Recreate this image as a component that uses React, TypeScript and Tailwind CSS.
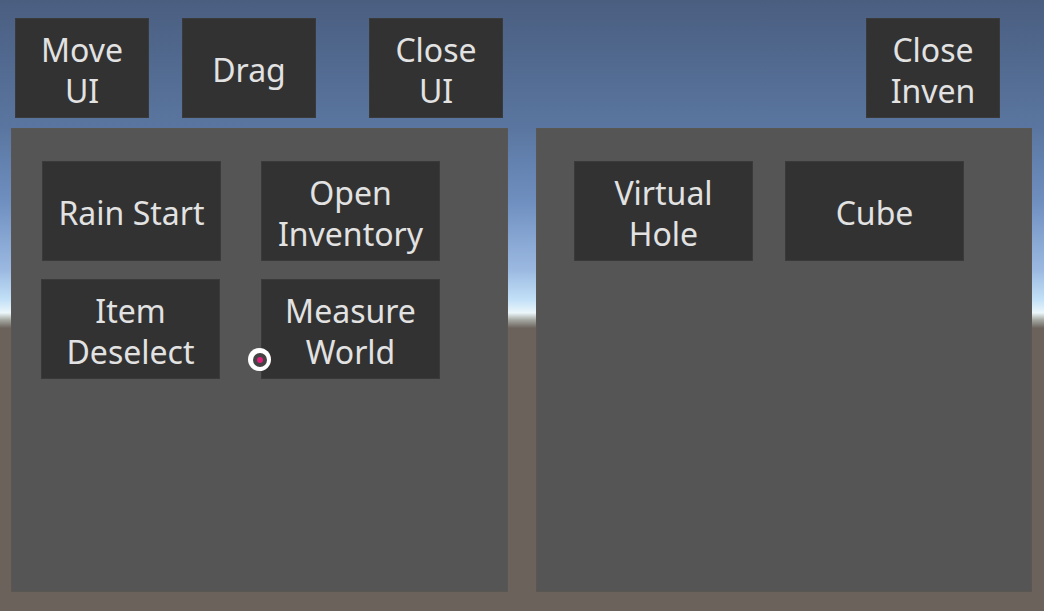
const topButtons = [
  { label: ["Move", "UI"], ml: "ml-[15px]" },
  { label: ["Drag"], ml: "ml-[33px]" },
  { label: ["Close", "UI"], ml: "ml-[53px]" },
  { label: ["Close", "Inven"], ml: "ml-auto" },
];

function Btn({ lines, className = "" }: { lines: string[]; className?: string }) {
  return (
    <div
      className={`flex h-[100px] flex-col items-center justify-center border border-[#3a3a3a] bg-[#323232] pt-[3px] text-[32px] leading-[41px] text-[#e2e2e2] ${className}`}
    >
      {lines.map((l) => (
        <span key={l}>{l}</span>
      ))}
    </div>
  );
}

export default function App() {
  return (
    <div
      className="relative flex h-[611px] w-[1044px] flex-col overflow-hidden bg-[linear-gradient(to_bottom,#4a5e80_0%,#5a76a0_21%,#6f8fc0_33%,#9ab8e0_44%,#c2e0f7_49%,#ebf6fa_51.2%,#a3a69f_52.4%,#6b625c_53.7%,#6b625c_100%)]"
      style={{ fontFamily: '"Noto Sans", "Open Sans", sans-serif' }}
    >
      <div className="mr-[44px] mt-[18px] flex">
        {topButtons.map((b) => (
          <Btn key={b.label.join(" ")} lines={b.label} className={`w-[134px] ${b.ml}`} />
        ))}
      </div>

      <div className="mt-[10px] flex">
        {/* main UI panel */}
        <div className="ml-[11px] h-[464px] w-[497px] border border-[#5a5753] bg-[#555555] pl-[30px] pt-[32px]">
          <div className="flex gap-[40px]">
            <Btn lines={["Rain Start"]} className="w-[179px]" />
            <Btn lines={["Open", "Inventory"]} className="w-[179px]" />
          </div>
          <div className="mt-[18px] flex gap-[41px]">
            <Btn lines={["Item", "Deselect"]} className="-ml-px w-[179px]" />
            <Btn lines={["Measure", "World"]} className="w-[179px]" />
          </div>
        </div>

        {/* inventory panel */}
        <div className="ml-[28px] h-[464px] w-[496px] border border-[#5a5753] bg-[#555555] pl-[37px] pt-[32px]">
          <div className="flex gap-[32px]">
            <Btn lines={["Virtual", "Hole"]} className="w-[179px]" />
            <Btn lines={["Cube"]} className="w-[179px]" />
          </div>
        </div>
      </div>

      {/* cursor */}
      <div className="absolute left-[248px] top-[348px] flex h-[23px] w-[23px] items-center justify-center rounded-full bg-white">
        <div className="flex h-[14px] w-[14px] items-center justify-center rounded-full bg-[#444]">
          <div className="h-[6px] w-[6px] rounded-full bg-[#e0207a]" />
        </div>
      </div>
    </div>
  );
}
